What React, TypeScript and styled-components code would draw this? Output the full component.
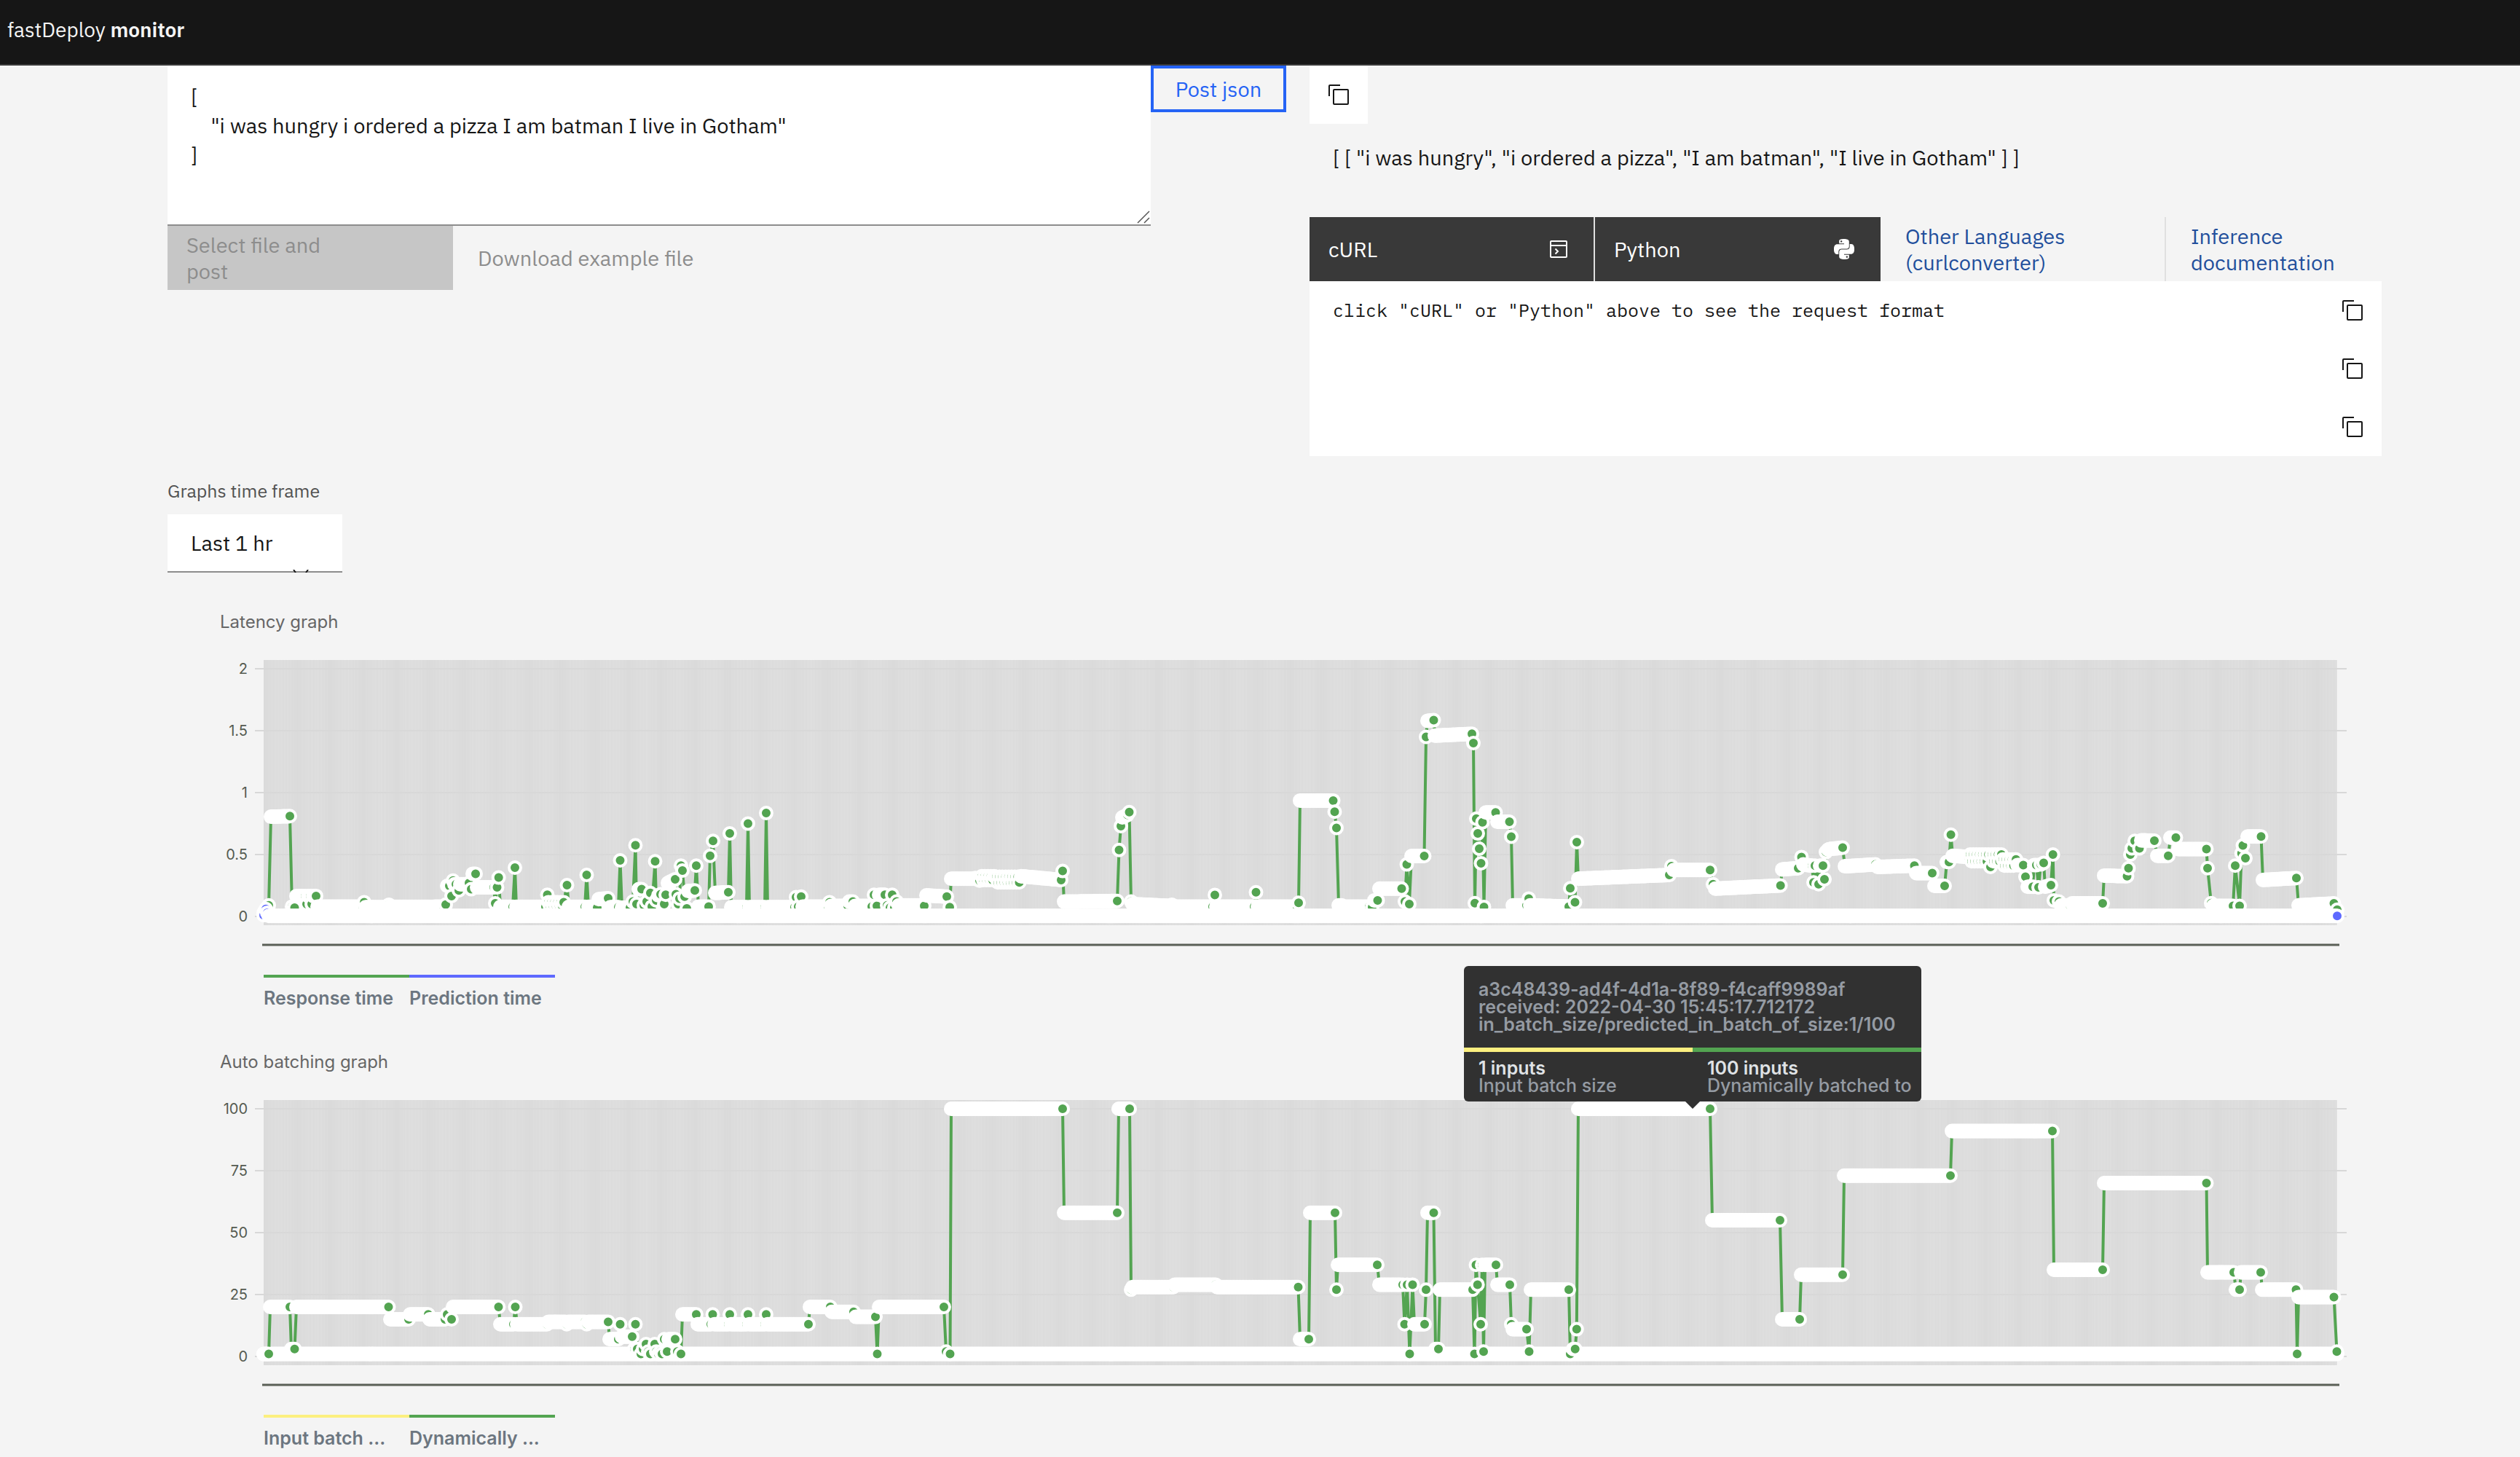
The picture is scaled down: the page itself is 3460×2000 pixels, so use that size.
import React from "react";
import styled, { createGlobalStyle } from "styled-components";
import { SiPython } from "react-icons/si";

const uiFont = `"IBM Plex Sans", "Noto Sans", sans-serif`;
const chartFont = `Inter, "Liberation Sans", sans-serif`;

const color = {
  ink: "#161616",
  page: "#f4f4f4",
  blue: "#2563f5",
  link: "#224f9c",
  green: "#53a451",
  violet: "#5e69ff",
  yellow: "#fcef7f",
  plot: "#dadada",
  tooltip: "#313131",
  muted: "#8d8d8d",
};

const GlobalStyle = createGlobalStyle`
  *, *::before, *::after { box-sizing: border-box; }
  body {
    margin: 0;
    background: ${color.page};
    color: ${color.ink};
    font-family: ${uiFont};
    font-size: 29px;
    line-height: 36px;
  }
  button, textarea, select { font: inherit; border-radius: 0; }
`;

const Header = styled.header`
  display: flex;
  align-items: center;
  height: 90px;
  padding: 0 10px 6px;
  border-bottom: 2px solid #393939;
  background: ${color.ink};
  color: #f4f4f4;
`;

const Brand = styled.h1`
  margin: 0;
  font-size: 28px;
  font-weight: 400;

  strong { font-weight: 600; }
`;

const Main = styled.main`
  padding: 0 190px 0 230px;
`;

const Playground = styled.section`
  display: grid;
  grid-template-columns: minmax(0, 1350fr) 186px minmax(0, 1504fr);
  align-items: start;
`;

const Editor = styled.div`
  position: relative;
  display: flex;
`;

const JsonInput = styled.textarea`
  display: block;
  width: 100%;
  height: 220px;
  padding: 22px 32px;
  border: 0;
  border-bottom: 2px solid ${color.muted};
  outline: 0;
  resize: none;
  background: #fff;
  color: ${color.ink};
  line-height: 40px;
`;

const ResizeGrip = styled.svg`
  position: absolute;
  right: 1px;
  bottom: 3px;
`;

const Actions = styled.div`
  display: flex;
`;

const Action = styled.button<{ $kind: "disabled" | "ghost" | "dark" }>`
  display: flex;
  align-items: center;
  justify-content: space-between;
  flex: 0 0 392px;
  height: 88px;
  border: 0;
  text-align: left;
  padding: ${(p) => (p.$kind === "ghost" ? "0 34px" : p.$kind === "dark" ? "0 32px 0 26px" : "0 126px 0 26px")};
  background: ${(p) => (p.$kind === "disabled" ? "#c6c6c6" : p.$kind === "dark" ? "#393939" : "transparent")};
  color: ${(p) => (p.$kind === "dark" ? "#fff" : color.muted)};
  border-right: ${(p) => (p.$kind === "dark" ? "2px solid #e0e0e0" : "0")};

  &:nth-child(2) { border-right-color: transparent; }
`;

const PythonIcon = styled(SiPython)`
  width: 32px;
  height: 32px;
  padding: 2px;
`;

const PostButton = styled.button`
  height: 64px;
  border: 4px solid ${color.blue};
  background: transparent;
  color: ${color.blue};
`;

const Results = styled.div`
  display: flex;
  flex-direction: column;
  margin-left: 32px;
`;

const CopyButton = styled.button`
  display: grid;
  place-items: center;
  width: 80px;
  height: 80px;
  padding: 0;
  border: 0;
  background: #fff;
  color: ${color.ink};
`;

const Output = styled.output`
  display: block;
  height: 128px;
  padding: 28px 32px;
  white-space: nowrap;
`;

const DocLink = styled.a`
  display: flex;
  align-items: center;
  flex: 0 0 390px;
  height: 88px;
  padding-left: 34px;
  color: ${color.link};
  text-decoration: none;

  & + & {
    flex: 1 1 0;
    min-width: 0;
    border-left: 2px solid #e0e0e0;
  }
`;

const LinkText = styled.span`
  max-width: 240px;
`;

const Snippet = styled.div`
  display: flex;
  justify-content: space-between;
  background: #fff;
`;

const Code = styled.pre`
  margin: 0;
  padding: 22px 32px;
  font-family: "IBM Plex Mono", "Liberation Mono", monospace;
  font-size: 25px;
  line-height: 36px;
`;

const TimeFrame = styled.div`
  display: flex;
  flex-direction: column;
  align-items: flex-start;
  gap: 16px;
  margin-top: 32px;
`;

const FieldLabel = styled.label`
  color: #525252;
  font-size: 25px;
  line-height: 32px;
`;

const SelectBox = styled.div`
  position: relative;
  display: flex;
  width: 240px;
`;

const Select = styled.select`
  width: 100%;
  height: 80px;
  padding: 0 32px;
  border: 0;
  border-bottom: 2px solid ${color.muted};
  appearance: none;
  background: #fff;
  color: ${color.ink};
`;

const Chevron = styled.svg`
  position: absolute;
  right: 46px;
  bottom: 0;
`;

const ChartSection = styled.section`
  margin-top: 56px;
  font-family: ${chartFont};

  &:first-of-type { margin-top: 52px; }
`;

const ChartTitle = styled.h2`
  margin: 0 72px;
  color: #666;
  font-size: 24px;
  font-weight: 400;
  line-height: 32px;
`;

const ChartArea = styled.figure`
  position: relative;
  margin: 30px 0 34px;

  svg { display: block; width: 100%; height: auto; }
`;

const TickLabel = styled.text`
  fill: #555b51;
  font-family: ${chartFont};
  font-size: 20px;
  text-anchor: end;
`;

const Legend = styled.ul`
  display: flex;
  margin: 0;
  padding: 0 132px;
  list-style: none;
`;

const LegendItem = styled.li<{ $color: string }>`
  width: 200px;
  padding-top: 12px;
  border-top: 4px solid ${(p) => p.$color};
  color: #6c7680;
  font-size: 25px;
  font-weight: 600;
  line-height: 32px;
  white-space: nowrap;
`;

const Tooltip = styled.div`
  position: absolute;
  left: 68.88%;
  bottom: calc(100% - 8px);
  width: 628px;
  transform: translateX(-50%);
  border-radius: 6px;
  background: ${color.tooltip};
  color: #959ba3;
  font-size: 25px;
  font-weight: 600;
  line-height: 24px;
  white-space: nowrap;

  &::after {
    content: "";
    position: absolute;
    top: 100%;
    left: calc(50% - 10px);
    border: 10px solid transparent;
    border-top-color: ${color.tooltip};
    border-bottom: 0;
  }
`;

const TooltipTitle = styled.div`
  padding: 20px;
`;

const TooltipValues = styled.div`
  display: grid;
  grid-template-columns: 1fr 1fr;
`;

const TooltipValue = styled.div<{ $color: string }>`
  padding: 10px 0 10px 20px;
  border-top: 6px solid ${(p) => p.$color};
  font-weight: 500;

  strong {
    display: block;
    color: #dfe2e5;
    font-weight: 600;
  }
`;

/* A run of samples: start second, end second, value at start, value at end. */
type Run = [number, number, number, number];
type Point = [number, number];

const DOMAIN_START = 362;
const DOMAIN_END = 3210;
const SAMPLE = 2.045;

const at = (x: number, v: number): Run => [x, x, v, v];
const run = (a: number, b: number, v: number, w = v): Run => [a, b, v, w];

/* Alternates between two levels from one sample to the next. */
const zigzag = (a: number, b: number, step: number, lo: number, hi: number): Run[] => {
  const out: Run[] = [];
  for (let x = a, i = 0; x <= b; x += step, i++) out.push(at(x, i % 2 ? lo : hi));
  return out;
};

const toPoints = (runs: Run[]): Point[] =>
  runs.flatMap(([a, b, v, w]) => {
    const n = Math.max(1, Math.round((b - a) / SAMPLE));
    if (a === b) return [[a, v] as Point];
    return Array.from({ length: n + 1 }, (_, i): Point => [a + ((b - a) * i) / n, v + ((w - v) * i) / n]);
  });

const responseTime: Run[] = [
  at(362, 0.03), at(366, 0.06), at(369, 0.09), run(372, 398, 0.805, 0.81), at(401, 0.08), at(404.5, 0.07),
  run(407, 419, 0.165), at(421, 0.1), run(423, 426, 0.165), at(428, 0.1), run(430, 434, 0.165),
  run(436, 498, 0.08), at(500, 0.115), run(502, 532, 0.075), at(534, 0.095), run(536, 595, 0.078), run(597, 609, 0.08),
  at(612, 0.096), at(614, 0.247), at(617, 0.247), at(620, 0.165), at(622, 0.29), at(624, 0.26), at(626, 0.26), at(630, 0.21),
  run(632, 642, 0.26), at(644, 0.27), at(647, 0.22), run(649, 653, 0.345), run(655, 678, 0.235),
  at(680, 0.105), at(682.5, 0.235), at(684.7, 0.314), run(687, 704, 0.078), at(707, 0.394),
  run(709, 749, 0.078), at(751.5, 0.175), ...zigzag(753, 776, 2.1, 0.085, 0.115), at(778.5, 0.253), run(781, 803, 0.078),
  at(805.5, 0.335), run(808, 817, 0.078), at(820, 0.07), run(822, 835, 0.14, 0.147), run(838, 849, 0.075), at(851.5, 0.453),
  run(854, 865, 0.07), at(869, 0.12), at(872.5, 0.575), at(874, 0.1), run(877, 881, 0.22), at(884, 0.09), at(888, 0.12),
  at(893, 0.19), at(895, 0.08), at(899.5, 0.445), at(901, 0.13), at(904, 0.17), at(907, 0.18), at(912, 0.1), at(914, 0.175),
  run(917, 927, 0.27, 0.3), at(928, 0.18), at(931, 0.1), at(933, 0.145), at(935, 0.41), at(937, 0.37), at(940, 0.16), at(943, 0.065),
  run(945, 954, 0.205, 0.21), at(956, 0.41), run(959, 970, 0.08), at(973, 0.08), at(975, 0.49), at(979, 0.61),
  run(982, 1000, 0.19, 0.196), at(1002, 0.67), run(1004, 1025, 0.075), at(1027, 0.75), run(1029, 1050, 0.075), at(1052, 0.835),
  run(1054, 1091, 0.075), at(1093, 0.155), at(1096, 0.08), at(1100, 0.16), run(1102, 1137, 0.08), at(1139, 0.115),
  run(1141, 1164, 0.085), run(1166, 1171, 0.12), run(1174, 1194, 0.085), at(1197, 0.08), at(1200, 0.175), at(1204, 0.085),
  run(1207, 1215, 0.175), at(1218, 0.09), at(1222, 0.07), at(1225, 0.175), at(1228, 0.07), at(1231, 0.12), run(1234, 1266, 0.09), at(1269, 0.085),
  run(1272, 1300, 0.17, 0.16), at(1304, 0.075), run(1306, 1337, 0.305), run(1339, 1345, 0.31, 0.29),
  ...zigzag(1348, 1366, 2.1, 0.295, 0.325), ...zigzag(1368, 1400, 2.1, 0.275, 0.32), run(1402, 1457, 0.325, 0.295),
  at(1459, 0.367), run(1461, 1534, 0.12, 0.125), at(1536.5, 0.537), at(1539, 0.73), run(1541, 1548, 0.8, 0.82), at(1550.5, 0.843),
  at(1553, 0.12), run(1555, 1607, 0.1, 0.085), at(1609, 0.095), run(1611, 1665, 0.08), at(1668, 0.174), run(1670, 1722, 0.08), at(1724.5, 0.196),
  run(1727, 1781, 0.08), at(1783, 0.11), run(1785, 1830.5, 0.936), at(1832.5, 0.845), at(1835, 0.715),
  run(1838, 1842, 0.09), run(1844, 1880, 0.08), at(1884, 0.075), run(1887, 1891.5, 0.13), run(1894, 1924.5, 0.225),
  at(1929, 0.12), at(1931.5, 0.42), at(1935, 0.1), run(1938, 1955.5, 0.488), at(1958, 1.45), run(1960, 1968.5, 1.58, 1.585),
  run(1970, 2021, 1.46, 1.475), at(2023, 1.4), at(2025, 0.107), at(2027, 0.79), at(2029, 0.67), at(2031, 0.547), at(2033.5, 0.43),
  at(2035.5, 0.76), at(2037.5, 0.077), run(2040, 2053.5, 0.84), run(2056, 2072.5, 0.764), at(2075, 0.644), run(2077, 2096, 0.09),
  at(2099, 0.145), run(2101, 2154, 0.09, 0.08), at(2156, 0.228), at(2162.5, 0.114), at(2165, 0.6), run(2167, 2292, 0.305, 0.335),
  at(2295, 0.405), run(2298, 2348, 0.375), at(2352, 0.26), run(2355, 2444.7, 0.225, 0.25), run(2447, 2469, 0.38, 0.39),
  at(2473.5, 0.48), run(2476, 2488, 0.42, 0.41), at(2490, 0.275), at(2492, 0.41), at(2497, 0.26), run(2499, 2503, 0.41), at(2505, 0.3),
  run(2507, 2510, 0.52, 0.54), run(2512, 2530, 0.545, 0.555), run(2533, 2575, 0.405, 0.42), run(2578, 2628.5, 0.4, 0.41),
  run(2631, 2653, 0.35), run(2656, 2670, 0.247), at(2673, 0.44), at(2676, 0.44), at(2678.6, 0.66), run(2681, 2703, 0.49, 0.48),
  ...zigzag(2705, 2732, 2.1, 0.445, 0.5), at(2733, 0.4), ...zigzag(2735, 2746, 2.1, 0.445, 0.5), at(2748, 0.5),
  ...zigzag(2750, 2767, 2.1, 0.41, 0.46), at(2768, 0.46), run(2770, 2778, 0.414), at(2781, 0.32), run(2784, 2791, 0.24),
  at(2793, 0.415), at(2796, 0.415), at(2799, 0.235), at(2802, 0.42), at(2806, 0.433), run(2808, 2816, 0.24, 0.253), at(2818.7, 0.5),
  at(2820, 0.13), at(2827, 0.12), run(2830, 2842, 0.09), run(2845, 2887, 0.105), run(2889, 2920.5, 0.33, 0.325),
  at(2922.5, 0.39), at(2925, 0.5), at(2927, 0.55), at(2931, 0.61), at(2937.5, 0.55), run(2940, 2958, 0.615, 0.612),
  run(2962, 2977, 0.49), run(2980, 2987.5, 0.637), run(2991, 3029.5, 0.545), at(3031, 0.39), at(3036, 0.107), run(3039, 3066, 0.085),
  at(3069, 0.41), at(3075, 0.085), at(3077.7, 0.51), at(3079.5, 0.573), at(3083, 0.47), run(3086, 3104.5, 0.645), run(3107, 3153, 0.295, 0.31),
  run(3156, 3204.5, 0.09, 0.105), at(3209, 0.055),
];

const predictionTime: Run[] = [at(362, 0.01), at(365, 0.06), at(367, 0.03), run(369, 3209, 0.004)];

const batchedTo: Run[] = [
  run(362, 369, 1), run(371, 398, 20), run(400, 404.5, 3), run(407, 533.5, 20), run(536, 561, 15), run(563, 588, 17),
  run(590, 611, 15), at(614, 17), at(620, 15), run(622, 684.5, 20), run(687, 705, 13), at(707.5, 20), run(710, 751, 13),
  run(753, 776, 14), at(778, 13), run(780, 803, 14), at(805.5, 13), run(808, 835, 14), run(837, 849, 7), at(851.5, 13),
  run(854, 868, 8), at(871, 3), at(872.5, 13), at(875, 3), at(880, 1), at(883, 3), at(887, 5), at(890, 2), at(893, 1), at(899, 5),
  at(901, 2), at(904, 1), at(907, 2), at(909, 1), at(912, 7), at(916, 2), run(918, 927, 7), at(930, 2), at(935, 1),
  run(937, 956, 17), run(958, 976, 13), at(978.5, 17), run(981, 1000, 13), at(1002, 17), run(1004, 1025, 13), at(1027, 17),
  run(1029, 1050, 13), at(1052, 17), run(1054, 1110, 13), run(1112, 1140, 20), run(1142, 1172, 18), run(1175, 1202, 16),
  at(1204.5, 1), run(1207, 1296, 20), at(1299, 2), at(1304.5, 1), run(1306, 1459, 100), run(1461, 1534, 58), run(1536, 1551, 100),
  at(1553, 27), run(1555, 1611, 28), run(1613, 1669, 29), run(1671, 1782.5, 28), run(1785, 1797, 7), run(1799, 1833, 58),
  at(1835, 27), run(1837, 1891, 37), run(1894, 1923, 29), at(1926, 29), at(1928.5, 13), at(1932, 29), at(1935.5, 1), at(1939.5, 29),
  run(1942, 1956, 13), at(1958, 27), run(1960, 1968.5, 58), run(1971, 1975, 3), run(1977, 2022, 27), at(2024.5, 1), at(2026.5, 37),
  at(2028.7, 29), at(2033, 13), at(2035, 37), at(2037, 2), run(2039, 2054, 37), run(2056, 2073, 29), at(2075, 13), run(2077, 2096, 11),
  at(2099.5, 2), run(2102, 2154, 27), at(2156, 1), run(2160, 2162.7, 3), at(2164.8, 11), run(2167, 2348, 100), run(2351, 2444, 55),
  run(2447, 2471, 15), run(2473, 2530, 33), run(2532, 2678, 73), run(2680, 2818, 91), run(2820, 2887, 35), run(2889, 3029.5, 70),
  run(3031, 3067, 34), run(3070, 3075, 27), run(3077, 3104, 34), run(3106, 3152.5, 27), at(3154, 1), run(3156, 3204.5, 24), at(3208.5, 2),
];

const inputBatch: Run[] = [run(362, 3209, 1)];

const sampleTimes = Array.from(
  { length: Math.floor((DOMAIN_END - DOMAIN_START) / SAMPLE) },
  (_, i) => (DOMAIN_START + 1 + i * SAMPLE).toFixed(2),
);

interface Series {
  name: string;
  color: string;
  runs: Run[];
}

interface PlotProps {
  label: string;
  ticks: number[];
  series: Series[];
}

const PLOT_TOP = 18;
const PLOT_HEIGHT = 340;

function Plot({ label, ticks, series }: PlotProps) {
  const max = ticks[0];
  const y = (v: number) => PLOT_TOP + PLOT_HEIGHT * (1 - v / max);
  return (
    <svg viewBox="230 0 3040 404" role="img" aria-label={label}>
      {ticks.map((t) => (
        <g key={t}>
          <path d={`M350 ${y(t)}H3222`} stroke="#d8d8d8" strokeWidth="2" />
          <TickLabel x="340" y={y(t) + 7}>{t}</TickLabel>
        </g>
      ))}
      <g stroke={color.plot} strokeWidth="2">
        {sampleTimes.map((x) => (
          <path key={x} d={`M${x} 6V370`} />
        ))}
      </g>
      {ticks.map((t) => (
        <path key={t} d={`M362 ${y(t)}H3210`} stroke="#d8d8d8" strokeWidth="2" />
      ))}
      <path d="M360 397H3212" stroke="#5a5f56" strokeWidth="3" />
      {series.map((s) => {
        const points = toPoints(s.runs);
        return (
          <g key={s.name}>
            <polyline
              points={points.map(([x, v]) => `${x.toFixed(1)},${y(v).toFixed(1)}`).join(" ")}
              fill="none"
              stroke={s.color}
              strokeWidth="4"
            />
            <g fill={s.color} stroke="#fff" strokeWidth="4">
              {points.map(([x, v], i) => (
                <circle key={i} cx={x.toFixed(1)} cy={y(v).toFixed(1)} r="8" />
              ))}
            </g>
          </g>
        );
      })}
    </svg>
  );
}

function CopyIcon() {
  return (
    <svg width="32" height="32" viewBox="0 0 32 32" fill="currentColor" aria-hidden="true">
      <path d="M28 10V28H10V10H28m0-2H10a2 2 0 0 0-2 2V28a2 2 0 0 0 2 2H28a2 2 0 0 0 2-2V10a2 2 0 0 0-2-2Z" />
      <path d="M4 18H2V4A2 2 0 0 1 4 2H18V4H4Z" />
    </svg>
  );
}

function TerminalIcon() {
  return (
    <svg width="32" height="32" viewBox="0 0 32 32" fill="none" stroke="currentColor" strokeWidth="2" aria-hidden="true">
      <rect x="5" y="5" width="22" height="22" rx="1" />
      <path d="M5 11H27M11.5 15.5L15 19L11.5 22.5" />
    </svg>
  );
}

export default function App() {
  return (
    <>
      <GlobalStyle />
      <Header>
        <Brand>
          fastDeploy <strong>monitor</strong>
        </Brand>
      </Header>
      <Main>
        <Playground>
          <div>
            <Editor>
              <JsonInput
                aria-label="Request json"
                spellCheck={false}
                defaultValue={'[\n    "i was hungry i ordered a pizza I am batman I live in Gotham"\n]'}
              />
              <ResizeGrip width="18" height="18" viewBox="0 0 18 18" stroke="#555" strokeWidth="1.5" aria-hidden="true">
                <path d="M1 17L17 1M10 17L17 10" />
              </ResizeGrip>
            </Editor>
            <Actions>
              <Action $kind="disabled" disabled>Select file and post</Action>
              <Action $kind="ghost" disabled>Download example file</Action>
            </Actions>
          </div>
          <PostButton>Post json</PostButton>
          <Results>
            <CopyButton aria-label="Copy output"><CopyIcon /></CopyButton>
            <Output>[ [ "i was hungry", "i ordered a pizza", "I am batman", "I live in Gotham" ] ]</Output>
            <Actions>
              <Action $kind="dark">cURL <TerminalIcon /></Action>
              <Action $kind="dark">Python <PythonIcon /></Action>
              <DocLink href="#languages"><LinkText>Other Languages (curlconverter)</LinkText></DocLink>
              <DocLink href="#docs"><LinkText>Inference documentation</LinkText></DocLink>
            </Actions>
            <Snippet>
              <Code>click "cURL" or "Python" above to see the request format</Code>
              <div>
                <CopyButton aria-label="Copy request"><CopyIcon /></CopyButton>
                <CopyButton aria-label="Copy headers"><CopyIcon /></CopyButton>
                <CopyButton aria-label="Copy body"><CopyIcon /></CopyButton>
              </div>
            </Snippet>
          </Results>
        </Playground>

        <TimeFrame>
          <FieldLabel htmlFor="time-frame">Graphs time frame</FieldLabel>
          <SelectBox>
            <Select id="time-frame" defaultValue="1h">
              <option value="1h">Last 1 hr</option>
            </Select>
            <Chevron width="22" height="4" viewBox="0 0 22 4" stroke={color.ink} strokeWidth="2" aria-hidden="true">
              <path d="M1 0L4 4M21 0L18 4" />
            </Chevron>
          </SelectBox>
        </TimeFrame>

        <div>
          <ChartSection>
            <ChartTitle>Latency graph</ChartTitle>
            <ChartArea>
              <Plot
                label="Latency graph"
                ticks={[2, 1.5, 1, 0.5, 0]}
                series={[
                  { name: "Response time", color: color.green, runs: responseTime },
                  { name: "Prediction time", color: color.violet, runs: predictionTime },
                ]}
              />
            </ChartArea>
            <Legend>
              <LegendItem $color={color.green}>Response time</LegendItem>
              <LegendItem $color={color.violet}>Prediction time</LegendItem>
            </Legend>
          </ChartSection>

          <ChartSection>
            <ChartTitle>Auto batching graph</ChartTitle>
            <ChartArea>
              <Plot
                label="Auto batching graph"
                ticks={[100, 75, 50, 25, 0]}
                series={[
                  { name: "Input batch size", color: color.yellow, runs: inputBatch },
                  { name: "Dynamically batched to", color: color.green, runs: batchedTo },
                ]}
              />
              <Tooltip role="tooltip">
                <TooltipTitle>
                  a3c48439-ad4f-4d1a-8f89-f4caff9989af
                  <br />
                  received: 2022-04-30 15:45:17.712172
                  <br />
                  in_batch_size/predicted_in_batch_of_size:1/100
                </TooltipTitle>
                <TooltipValues>
                  <TooltipValue $color={color.yellow}>
                    <strong>1 inputs</strong>
                    Input batch size
                  </TooltipValue>
                  <TooltipValue $color={color.green}>
                    <strong>100 inputs</strong>
                    Dynamically batched to
                  </TooltipValue>
                </TooltipValues>
              </Tooltip>
            </ChartArea>
            <Legend>
              <LegendItem $color={color.yellow}>Input batch ...</LegendItem>
              <LegendItem $color={color.green}>Dynamically ...</LegendItem>
            </Legend>
          </ChartSection>
        </div>
      </Main>
    </>
  );
}
